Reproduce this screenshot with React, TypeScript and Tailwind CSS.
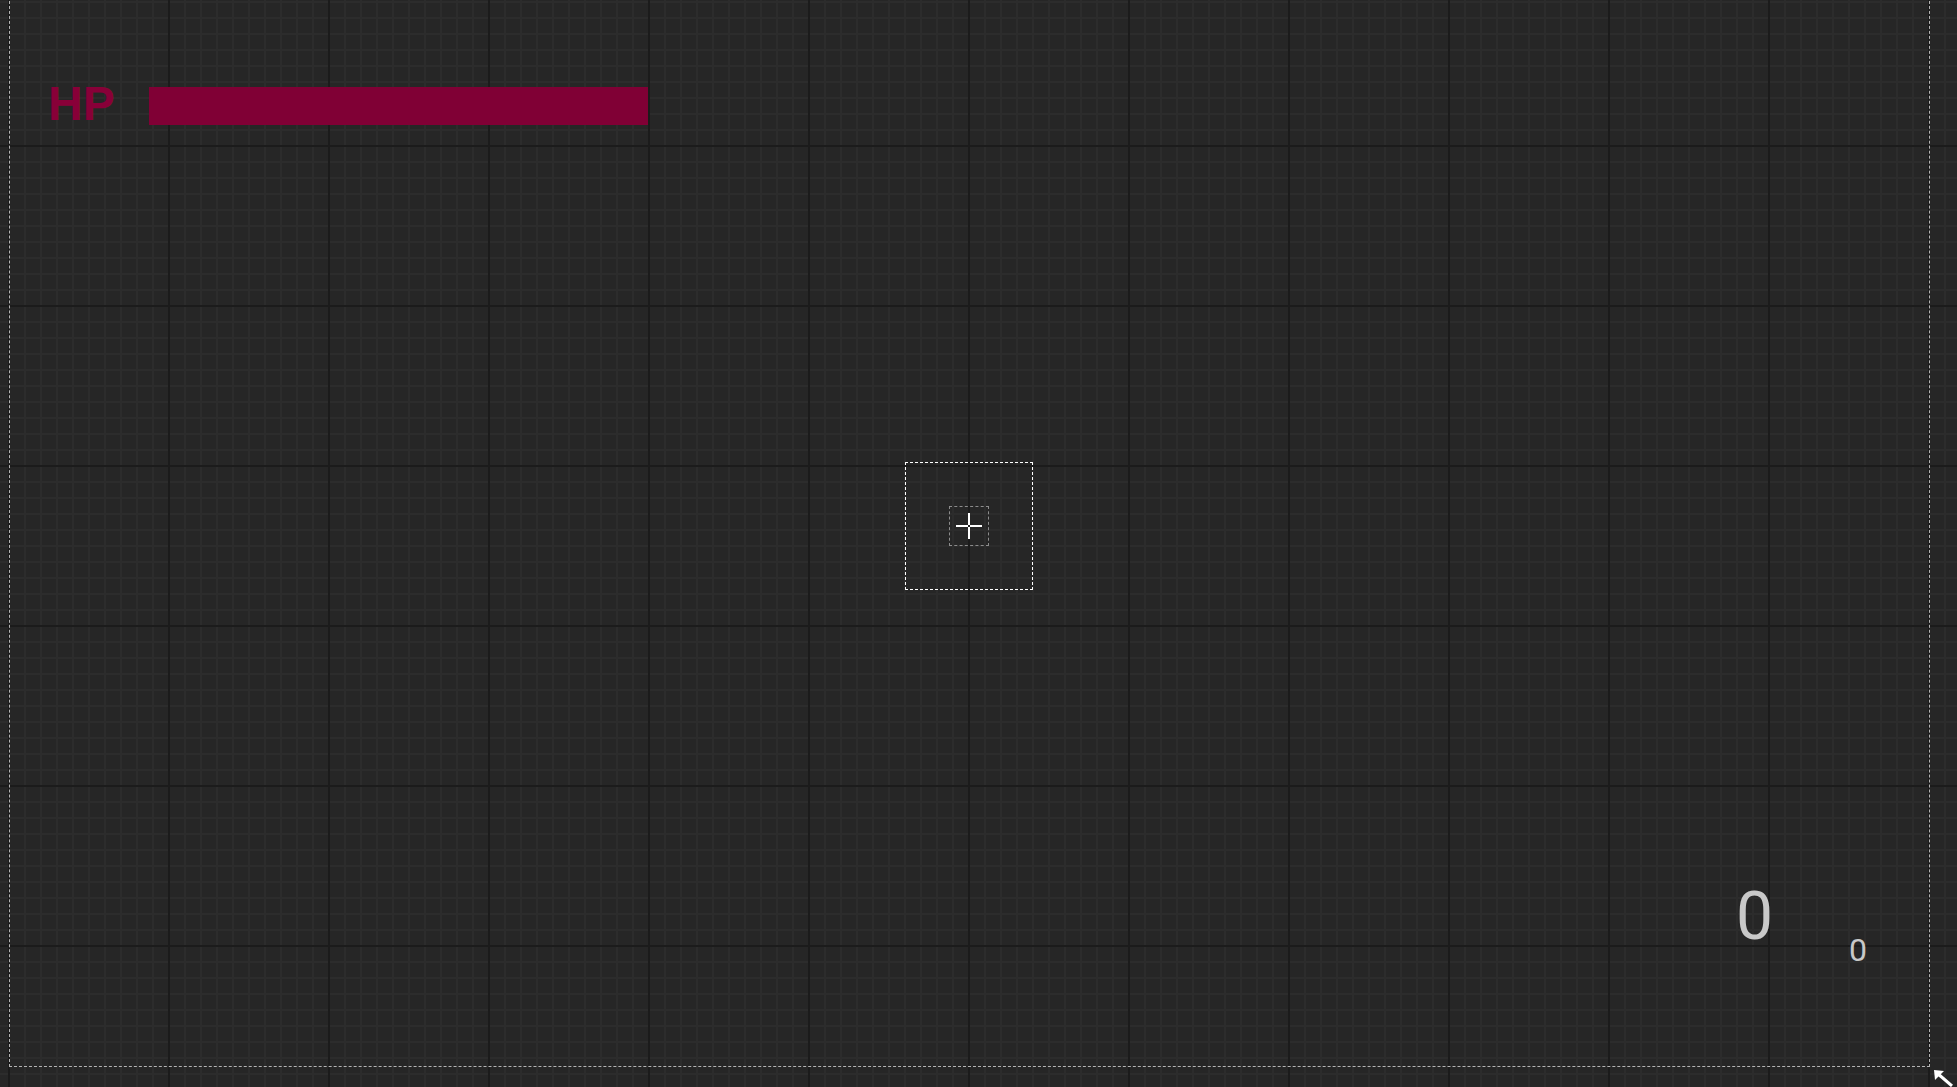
const Crosshair = () => (
  <svg width="38" height="38" viewBox="0 0 38 38" className="block">
    <rect x="6" y="18" width="12" height="2" fill="#ffffff" />
    <rect x="20" y="18" width="12" height="2" fill="#ffffff" />
    <rect x="18" y="6" width="2" height="12" fill="#ffffff" />
    <rect x="18" y="20" width="2" height="12" fill="#ffffff" />
  </svg>
);

const CornerCursor = () => (
  <svg width="22" height="18" viewBox="0 0 22 18" className="block">
    <polygon points="0,0 10,1 1,10" fill="#ffffff" />
    <line x1="3" y1="3" x2="18" y2="16" stroke="#ffffff" strokeWidth="3" />
  </svg>
);

export default function App() {
  return (
    <div className="relative w-[1957px] h-[1087px] overflow-hidden bg-[#262626] [background-image:linear-gradient(to_right,#1b1b1b_2px,transparent_2px),linear-gradient(to_bottom,#1b1b1b_2px,transparent_2px),linear-gradient(to_right,#2c2c2c_2px,transparent_2px),linear-gradient(to_bottom,#2c2c2c_2px,transparent_2px)] [background-size:160px_160px,160px_160px,16px_16px,16px_16px] [background-position:8px_-15px]">
      {/* game viewport */}
      <div className="ml-[9px] -mt-[14px] w-[1921px] h-[1081px] box-border border border-dashed border-[#b4b4b4] grid grid-rows-[475px_128px_1fr]">
        {/* HUD top: health */}
        <div className="flex items-start pl-[38px] pt-[93px] gap-[34px]">
          <span className="font-['Liberation_Sans',Arial,sans-serif] font-bold text-[48px] leading-none text-[#880038]">
            HP
          </span>
          <div className="mt-[7px] w-[499px] h-[38px] bg-[#800035]" />
        </div>

        {/* crosshair */}
        <div className="flex justify-center pr-[2px]">
          <div className="w-[128px] h-[128px] box-border border border-dashed border-white flex items-center justify-center">
            <div className="w-[40px] h-[40px] box-border border border-dashed border-[#8c8c8c]">
              <Crosshair />
            </div>
          </div>
        </div>

        {/* score */}
        <div className="flex justify-end items-start pr-[62px] pt-[294px] gap-[76px] font-['Roboto','Liberation_Sans',sans-serif] text-[#c8c8c8]">
          <span className="text-[66px] leading-none">0</span>
          <span className="mt-[50px] text-[32px] leading-none">0</span>
        </div>
      </div>

      <div className="absolute left-[1934px] top-[1070px]">
        <CornerCursor />
      </div>
    </div>
  );
}
